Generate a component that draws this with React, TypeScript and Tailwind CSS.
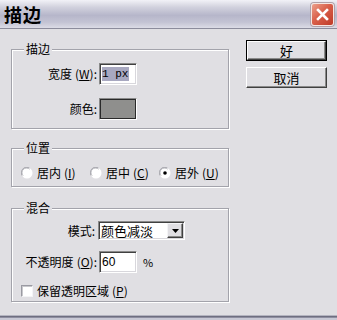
import React from "react";

const font = { fontFamily: '"Noto Sans CJK SC", "Noto Sans", sans-serif' };

function Group({ title, className, children }: { title: string; className: string; children?: React.ReactNode }) {
  return (
    <div className={`relative w-[218px] border border-[#a3a3ab] shadow-[inset_1px_1px_0_#ffffff,1px_1px_0_#ffffff] ${className}`}>
      <div className="absolute top-[-8px] left-[12px] px-[2px] h-[14px] leading-[14px] bg-[#e0dfe3] text-[12px] text-black">
        {title}
      </div>
      {children}
    </div>
  );
}

function Sunken({ className, children }: { className: string; children?: React.ReactNode }) {
  return (
    <div
      className={`border border-t-[#8a8a8a] border-l-[#8a8a8a] border-b-[#ffffff] border-r-[#ffffff] shadow-[inset_1px_1px_0_#404040,inset_-1px_-1px_0_#d8d7dc] ${className}`}
    >
      {children}
    </div>
  );
}

function Radio({ checked }: { checked?: boolean }) {
  return (
    <svg width="12" height="12" viewBox="0 0 12 12" className="shrink-0">
      <circle cx="6" cy="6" r="5.5" fill="#ffffff" />
      <path d="M1.2 8.2 A5.2 5.2 0 0 1 8.2 1.2" stroke="#9a9aa2" strokeWidth="1.2" fill="none" />
      <path d="M2.3 8.8 A4 4 0 0 1 8.8 2.3" stroke="#c8c8cc" strokeWidth="1" fill="none" />
      {checked && <circle cx="6" cy="6" r="1.8" fill="#000000" />}
    </svg>
  );
}

function Mn({ k }: { k: string }) {
  return (
    <span className="ml-[3px]">
      (<u>{k}</u>)
    </span>
  );
}

export default function App() {
  return (
    <div className="w-[337px] h-[320px] bg-[#e0dfe3] flex flex-col overflow-hidden text-black" style={font}>
      {/* Title bar */}
      <div className="h-[28px] shrink-0 flex items-center justify-between pl-[4px] pr-[3px] bg-[linear-gradient(to_bottom,#f2f2f7_0%,#d2d2de_25%,#b6b6ca_55%,#c4c4d4_80%,#dcdce6_100%)]">
        <span className="text-[18px] font-bold leading-none tracking-[1px] text-black">描边</span>
        <div className="w-[23px] h-[23px] rounded-[3px] border border-[#f4e6e2] bg-[linear-gradient(135deg,#eca08c_0%,#d9604a_45%,#bf3a28_100%)] flex items-center justify-center shadow-[0_0_0_1px_#b0a0a8]">
          <svg width="13" height="13" viewBox="0 0 13 13">
            <path d="M2 2 L11 11 M11 2 L2 11" stroke="#ffffff" strokeWidth="2.6" strokeLinecap="square" />
          </svg>
        </div>
      </div>
      <div className="h-px shrink-0 bg-[#8c8c9c]" />

      {/* Body */}
      <div className="flex-1 flex">
        <div className="pl-[11px] pt-[20px] flex flex-col">
          <Group title="描边" className="h-[80px] pt-[13px]">
            <div className="flex items-center gap-[2px]">
              <div className="w-[85px] text-right text-[12px] leading-[14px]">
                宽度<Mn k="W" />:
              </div>
              <Sunken className="w-[38px] h-[22px] bg-white flex items-center pl-[2px]">
                <span className="bg-[#a8a8c0] text-[11px] leading-[14px] pr-[1px]" style={{ fontFamily: '"Liberation Mono", monospace' }}>
                  1 px
                </span>
              </Sunken>
            </div>
            <div className="flex items-center gap-[2px] mt-[13px]">
              <div className="w-[85px] text-right text-[12px] leading-[14px]">颜色:</div>
              <div className="w-[38px] h-[22px] border border-t-[#8a8a8a] border-l-[#8a8a8a] border-b-[#ffffff] border-r-[#ffffff]">
                <div className="w-full h-full border border-[#2a2a2a] bg-[#8f8f8d]" />
              </div>
            </div>
          </Group>

          <Group title="位置" className="h-[39px] mt-[19px] pt-[17px] pl-[9px]">
            <div className="flex items-center h-[14px] text-[12px] leading-[14px]">
              <div className="w-[70px] flex items-center gap-[4px]">
                <Radio />
                <span>居内<Mn k="I" /></span>
              </div>
              <div className="w-[70px] flex items-center gap-[4px]">
                <Radio />
                <span>居中<Mn k="C" /></span>
              </div>
              <div className="w-[70px] flex items-center gap-[4px]">
                <Radio checked />
                <span>居外<Mn k="U" /></span>
              </div>
            </div>
          </Group>

          <Group title="混合" className="h-[94px] mt-[21px] pt-[12px]">
            <div className="flex items-center gap-[1px]">
              <div className="w-[85px] text-right text-[12px] leading-[14px] pr-[2px]">模式:</div>
              <Sunken className="w-[87px] h-[19px] bg-white flex items-center justify-between pl-[2px] pr-[1px]">
                <span className="text-[13px] leading-[15px]">颜色减淡</span>
                <div className="w-[16px] h-[15px] bg-[#e0dfe3] border border-t-[#f4f4f6] border-l-[#f4f4f6] border-b-[#404040] border-r-[#404040] shadow-[inset_-1px_-1px_0_#8a8a8a] flex items-center justify-center">
                  <svg width="7" height="4" viewBox="0 0 7 4">
                    <path d="M0 0 H7 L3.5 4 Z" fill="#000000" />
                  </svg>
                </div>
              </Sunken>
            </div>
            <div className="flex items-center mt-[11px]">
              <div className="w-[85px] text-right text-[12px] leading-[14px] mr-[2px]">
                不透明度<Mn k="O" />:
              </div>
              <Sunken className="w-[38px] h-[22px] bg-white flex items-center pl-[2px]">
                <span className="text-[12px] leading-[14px]" style={{ fontFamily: '"Liberation Sans", sans-serif' }}>60</span>
              </Sunken>
              <span className="ml-[6px] text-[11px] leading-[14px]">%</span>
            </div>
            <div className="flex items-center mt-[11px] pl-[9px] gap-[4px] text-[12px] leading-[14px]">
              <div className="w-[12px] h-[12px] bg-white border border-t-[#9a9aa2] border-l-[#9a9aa2] border-b-[#f4f4f6] border-r-[#f4f4f6] shadow-[inset_1px_1px_0_#c8c8cc]" />
              <span>保留透明区域<Mn k="P" /></span>
            </div>
          </Group>
        </div>

        <div className="ml-[17px] pt-[11px] flex flex-col gap-[6px]">
          <div className="w-[81px] h-[21px] border border-black bg-[#e0dfe3] flex">
            <div className="flex-1 border border-t-white border-l-white border-b-[#404040] border-r-[#404040] shadow-[inset_-1px_-1px_0_#8a8a8a] flex items-center justify-center text-[13px] leading-none">
              好
            </div>
          </div>
          <div className="w-[81px] h-[21px] bg-[#e0dfe3] border border-t-white border-l-white border-b-[#404040] border-r-[#404040] shadow-[inset_-1px_-1px_0_#8a8a8a] flex items-center justify-center text-[13px] leading-none">
            取消
          </div>
        </div>
      </div>

      {/* Bottom frame */}
      <div className="h-px shrink-0 bg-[#b4b4c0]" />
      <div className="h-px shrink-0 bg-[#6e6e80]" />
      <div className="h-px shrink-0 bg-[#8e8ea0]" />
      <div className="h-[2px] shrink-0 bg-[#c8c8d4]" />
    </div>
  );
}
